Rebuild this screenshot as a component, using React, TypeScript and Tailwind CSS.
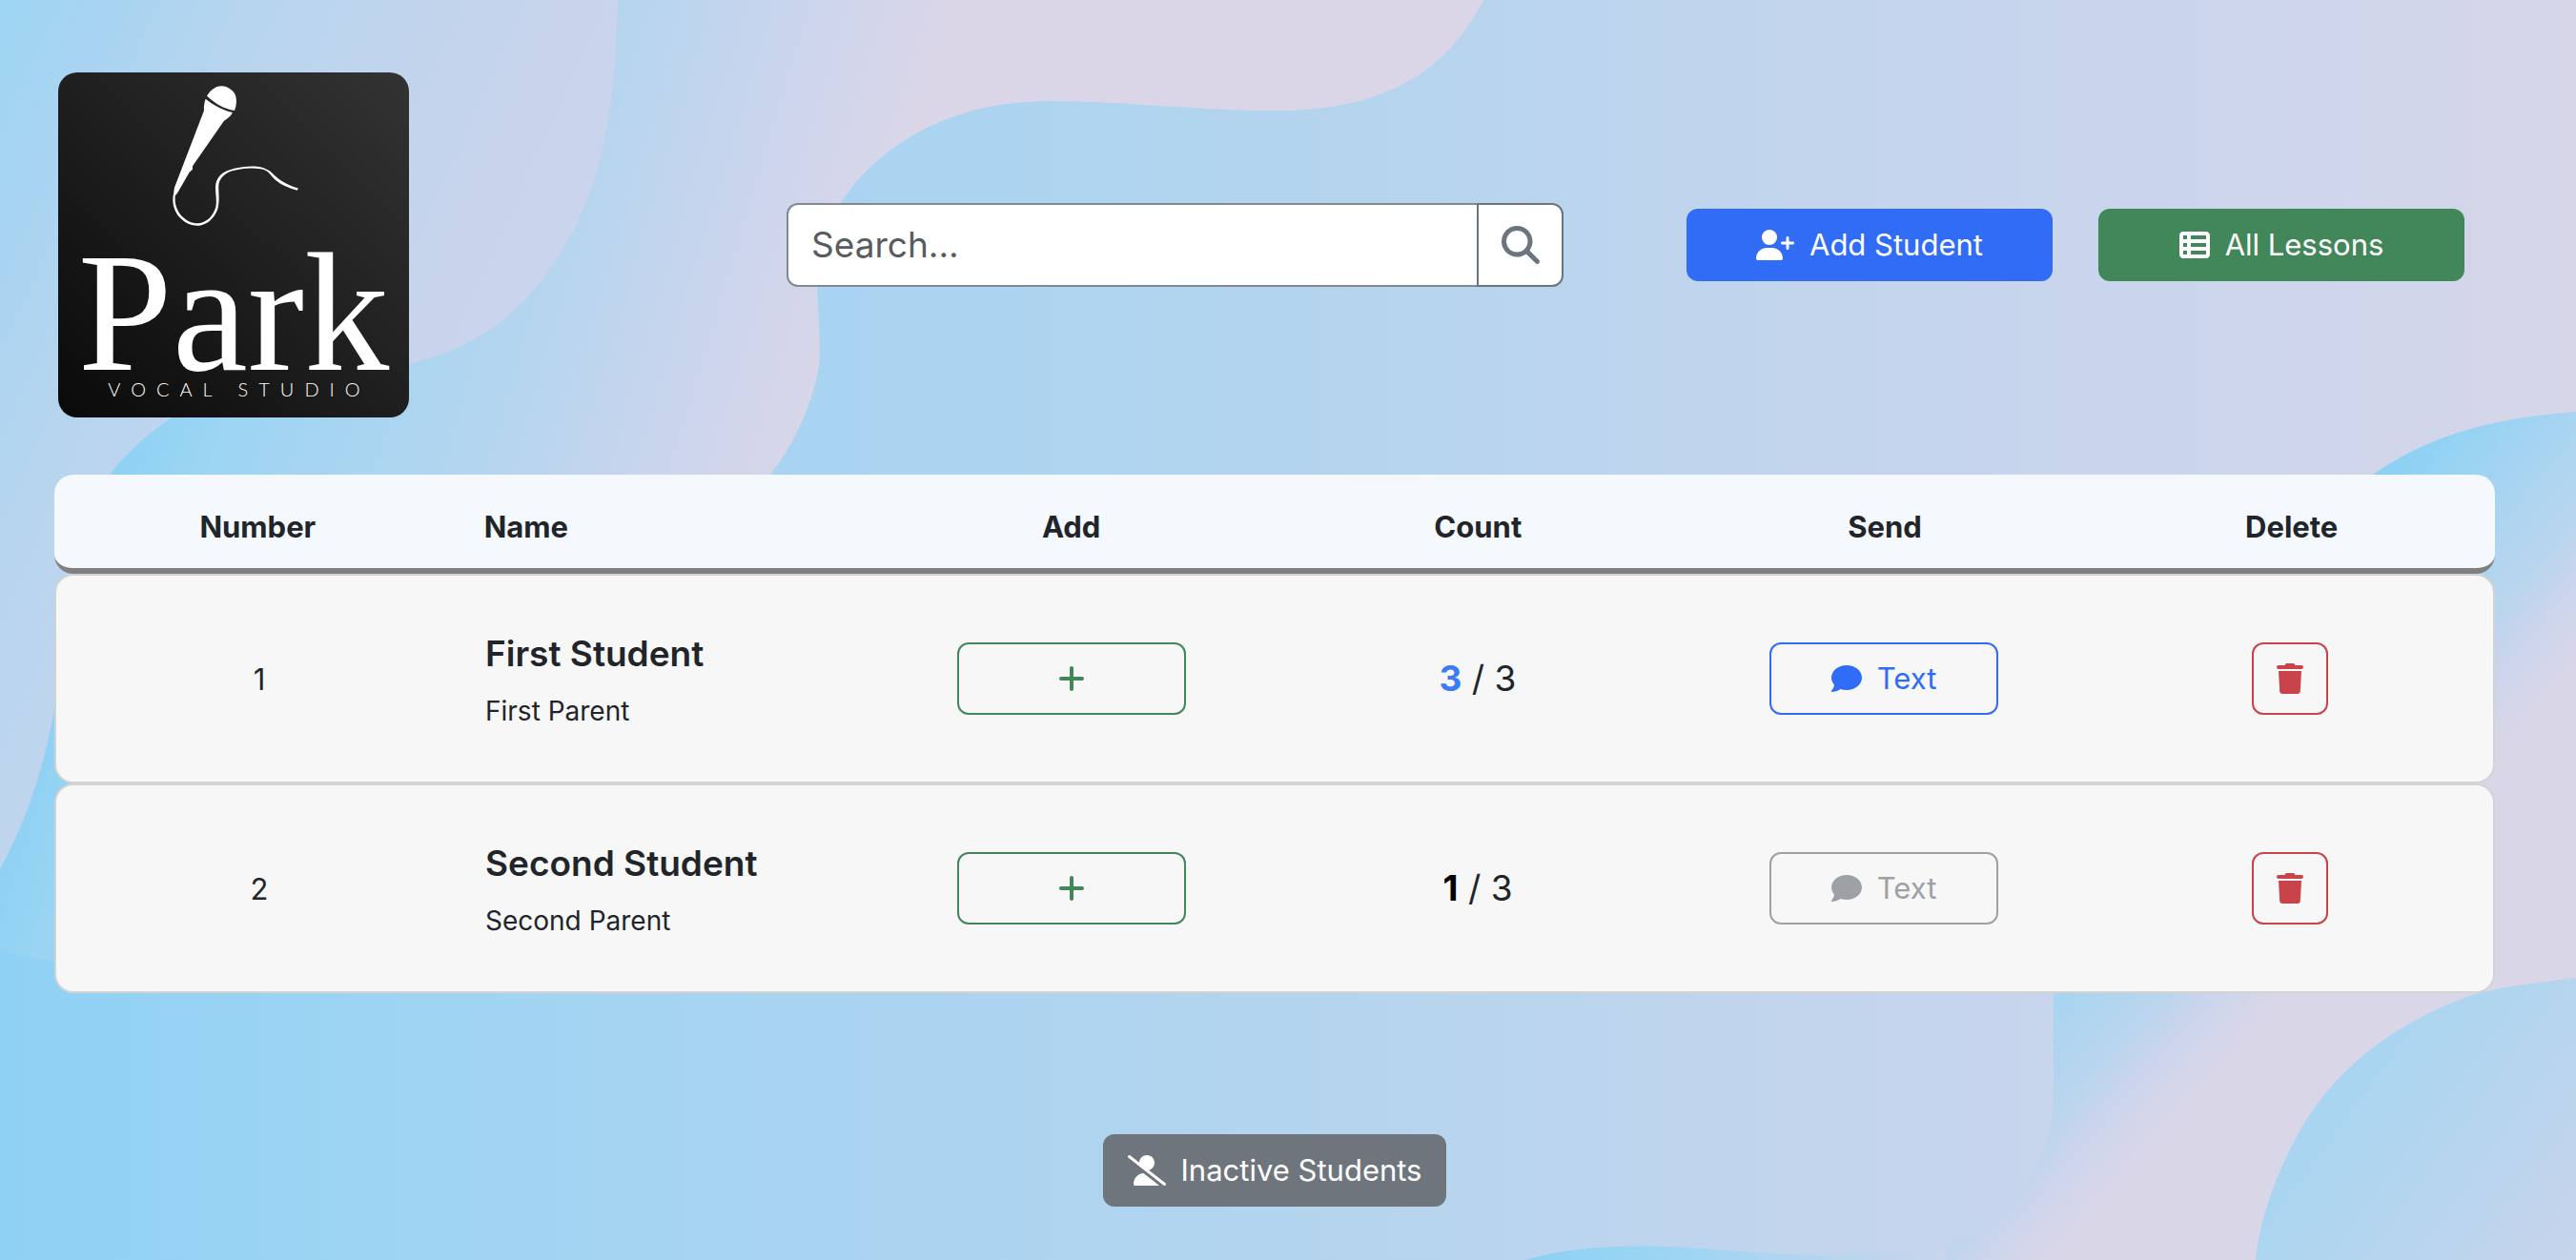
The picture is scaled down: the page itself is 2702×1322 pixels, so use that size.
import { FaComment, FaMagnifyingGlass, FaPlus, FaTableList, FaUserPlus, FaUserSlash } from "react-icons/fa6";

type Student = { name: string; parent: string; done: number; total: number };

const students: Student[] = [
  { name: "First Student", parent: "First Parent", done: 3, total: 3 },
  { name: "Second Student", parent: "Second Parent", done: 1, total: 3 },
];

const columns = ["Number", "Name", "Add", "Count", "Send", "Delete"];

function Backdrop() {
  return (
    <svg
      className="absolute inset-0 -z-10 h-full w-full"
      viewBox="0 0 2702 1322"
      preserveAspectRatio="xMidYMid slice"
      aria-hidden="true"
    >
      <defs>
        <linearGradient id="base" gradientUnits="userSpaceOnUse" x1="0" y1="0" x2="2702" y2="0">
          <stop offset="0" stopColor="#8fd1f4" />
          <stop offset="0.16" stopColor="#9fd4f3" />
          <stop offset="0.32" stopColor="#a9d4f1" />
          <stop offset="0.5" stopColor="#b3d4ee" />
          <stop offset="0.7" stopColor="#c2d5ed" />
          <stop offset="0.84" stopColor="#cad5ed" />
          <stop offset="1" stopColor="#d6d6e8" />
        </linearGradient>
        <linearGradient id="corner" gradientUnits="userSpaceOnUse" x1="0" y1="0" x2="532" y2="240">
          <stop offset="0" stopColor="#9ed6f3" />
          <stop offset="0.2" stopColor="#a9d4f1" />
          <stop offset="0.45" stopColor="#b9d5ee" />
          <stop offset="1" stopColor="#cad4ec" />
        </linearGradient>
        <linearGradient id="ribbon" gradientUnits="userSpaceOnUse" x1="259" y1="0" x2="939" y2="204">
          <stop offset="0" stopColor="#8dd1f4" />
          <stop offset="0.15" stopColor="#9dd5f3" />
          <stop offset="0.525" stopColor="#b4d5ef" />
          <stop offset="0.784" stopColor="#cad5ed" />
          <stop offset="1" stopColor="#dad6e8" />
        </linearGradient>
        <linearGradient id="right" gradientUnits="userSpaceOnUse" x1="2300" y1="725" x2="2510" y2="910">
          <stop offset="0" stopColor="#8dd1f4" />
          <stop offset="0.41" stopColor="#a9d5f1" />
          <stop offset="0.65" stopColor="#b9d5ee" />
          <stop offset="0.8" stopColor="#cad5ed" />
          <stop offset="1" stopColor="#d9d6e8" />
        </linearGradient>
        <linearGradient id="dome" gradientUnits="userSpaceOnUse" x1="2430" y1="1100" x2="2702" y2="1300">
          <stop offset="0" stopColor="#a5d5f3" />
          <stop offset="0.3" stopColor="#aed5ef" />
          <stop offset="1" stopColor="#c6d4ec" />
        </linearGradient>
        <linearGradient id="crest" gradientUnits="userSpaceOnUse" x1="1600" y1="0" x2="2050" y2="0">
          <stop offset="0" stopColor="#8dd1f4" />
          <stop offset="0.35" stopColor="#9dd5f3" />
          <stop offset="0.75" stopColor="#b9d5ee" />
          <stop offset="1" stopColor="#cad5ed" />
        </linearGradient>
      </defs>
      <rect width="2702" height="1322" fill="url(#base)" />
      <path
        fill="url(#ribbon)"
        d="M0 0H1556C1530 50 1480 116 1340 116C1250 116 1180 106 1100 106C960 106 880 190 860 260C852 300 864 350 858 390C850 430 830 470 808 498C760 640 300 1100 0 995Z"
      />
      <path
        fill="url(#corner)"
        d="M0 0H648C646 90 638 190 585 270C540 340 490 366 430 382C330 410 250 400 180 438C90 500 80 560 70 640C62 740 45 830 0 912Z"
      />
      <path
        fill="url(#right)"
        d="M2702 432C2620 438 2550 455 2489 498C2300 620 2154 800 2154 1042V1150C2154 1210 2110 1290 2040 1306V1322H2702Z"
      />
      <path fill="url(#crest)" d="M1600 1322C1660 1304 1740 1306 1800 1311C1900 1319 1960 1320 2040 1305V1322Z" />
      <path
        fill="url(#dome)"
        d="M2702 1026C2650 1032 2610 1038 2590 1045C2490 1082 2435 1140 2405 1200C2385 1240 2370 1280 2366 1322H2702Z"
      />
    </svg>
  );
}

function TrashIcon() {
  return (
    <svg className="h-8 w-7" viewBox="0 0 28 32" fill="currentColor" aria-hidden="true">
      <path d="M9 1.2C9.3 .4 10 0 10.8 0H17.200C18 0 18.700 .4 19 1.200L19.500 2H26A2 2 0 0 1 26 6H2A2 2 0 0 1 2 2H8.500Z" />
      <path d="M2 8H26L24.800 29.200A3 3 0 0 1 21.800 32H6.200A3 3 0 0 1 3.200 29.200Z" />
    </svg>
  );
}

function Logo() {
  return (
    <div className="flex h-[362px] w-[368px] flex-col items-center overflow-hidden rounded-[20px] bg-linear-to-tr from-[#0a0a0a] via-[#1f1f1f] to-[#333333] text-white">
      <svg className="h-[180px] w-full shrink-0" viewBox="63 48 1104 540" aria-hidden="true">
        <path
          fill="currentColor"
          d="M531 122C545 100 562 91 577 91C600 92 618 108 622 124C626 142 622 158 618 168C585 162 560 148 531 122Z"
        />
        <path
          fill="currentColor"
          d="M527 131C552 152 585 168 612 174C606 186 596 194 585 200L486 343V353L476 362L438 428L431 436L426 430L429 410L522 168C521 155 523 142 527 131Z"
        />
        <path
          fill="currentColor"
          d="M426 430C420 458 428 486 446 505C464 525 486 532 508 530C535 526 556 505 565 478C572 450 567 425 568 405C569 385 582 370 604 360C632 350 670 347 700 352C722 356 728 366 738 378C756 398 786 412 816 419L818 412C792 405 762 390 743 371C732 358 716 348 690 344C660 341 622 347 596 357C570 368 560 385 558 408C558 430 563 450 559 472C550 502 530 520 505 523C484 524 466 514 452 500C434 480 428 456 432 432Z"
        />
      </svg>
      <span className="mt-4 font-['Liberation_Serif',serif] text-[178px] leading-[112px]">Park</span>
      <span className="mt-3 pl-3 font-['Lato',sans-serif] text-xl leading-6 font-light tracking-[11px]">VOCAL STUDIO</span>
    </div>
  );
}

function StudentRow({ student, index }: { student: Student; index: number }) {
  const complete = student.done === student.total;
  return (
    <tr className="grid h-[220px] grid-cols-6 items-center rounded-[20px] border-2 border-[#d3d3d3] bg-[#f7f7f7]">
      <td className="pt-0.5 text-center text-[31px]">{index + 1}</td>
      <td className="px-6 pt-1">
        <div className="text-[37px] leading-[48px] font-semibold">{student.name}</div>
        <div className="mt-4 text-[28px] leading-10">{student.parent}</div>
      </td>
      <td className="flex justify-center">
        <button
          aria-label={`Add lesson for ${student.name}`}
          className="flex h-[76px] w-60 items-center justify-center rounded-xl border-2 border-[#428759] text-[#428759]"
        >
          <FaPlus className="h-8 w-7" />
        </button>
      </td>
      <td className="text-center text-[37px]">
        <span className={complete ? "font-bold text-[#3a7bf7]" : "font-bold text-black"}>{student.done}</span> / {student.total}
      </td>
      <td className="flex justify-center">
        <button
          disabled={!complete}
          className="flex h-[76px] w-60 items-center justify-center gap-4 rounded-xl border-2 border-[#306cf6] text-[31px] text-[#306cf6] disabled:border-[#9da1a6] disabled:text-[#9da1a6]"
        >
          <FaComment className="size-8" />
          Text
        </button>
      </td>
      <td className="flex justify-center">
        <button
          aria-label={`Delete ${student.name}`}
          className="flex h-[76px] w-20 items-center justify-center rounded-xl border-2 border-[#c9434a] text-[#c9434a]"
        >
          <TrashIcon />
        </button>
      </td>
    </tr>
  );
}

export default function App() {
  return (
    <div className="relative isolate min-h-screen overflow-hidden pt-[76px] pr-[85px] pb-14 pl-[57px] font-['Inter',sans-serif] text-[#212529]">
      <Backdrop />
      <header className="grid grid-cols-[30%_32%_38%] items-center">
        <div className="pl-1">
          <Logo />
        </div>
        <form role="search" className="mr-1 flex h-[88px]">
          <input
            type="search"
            aria-label="Search students"
            placeholder="Search..."
            className="min-w-0 flex-1 rounded-l-xl border-2 border-r-0 border-[#7f8a94] bg-white px-6 text-[37px] placeholder:text-[#595c5f]"
          />
          <button
            type="button"
            aria-label="Search"
            className="flex w-[91px] items-center justify-center rounded-r-xl border-2 border-[#6c757d] bg-white text-[#6c757d]"
          >
            <FaMagnifyingGlass className="size-10" />
          </button>
        </form>
        <div className="flex justify-end gap-12 pr-8">
          <button className="flex h-[76px] w-96 items-center justify-center gap-4 rounded-xl bg-[#306cf6] text-[31px] text-white">
            <FaUserPlus className="h-8 w-10" />
            Add Student
          </button>
          <button className="flex h-[76px] w-96 items-center justify-center gap-4 rounded-xl bg-[#428759] text-[31px] text-white">
            <FaTableList className="size-8" />
            All Lessons
          </button>
        </div>
      </header>

      <table className="mt-[60px] block">
        <thead className="block">
          <tr className="grid h-[104px] grid-cols-6 items-center rounded-[20px] border-b-[6px] border-[#808080] bg-[#f5f8fd] pt-3">
            {columns.map((column) => (
              <th
                key={column}
                scope="col"
                className={column === "Name" ? "px-6 text-left text-[31px] font-bold" : "text-center text-[31px] font-bold"}
              >
                {column}
              </th>
            ))}
          </tr>
        </thead>
        <tbody className="block">
          {students.map((student, index) => (
            <StudentRow key={student.name} student={student} index={index} />
          ))}
        </tbody>
      </table>

      <div className="mt-[148px] flex justify-center">
        <button className="flex h-[76px] items-center gap-4 rounded-xl bg-[#6f757d] px-[26px] text-[31px] text-white">
          <FaUserSlash className="h-8 w-10" />
          Inactive Students
        </button>
      </div>
    </div>
  );
}
